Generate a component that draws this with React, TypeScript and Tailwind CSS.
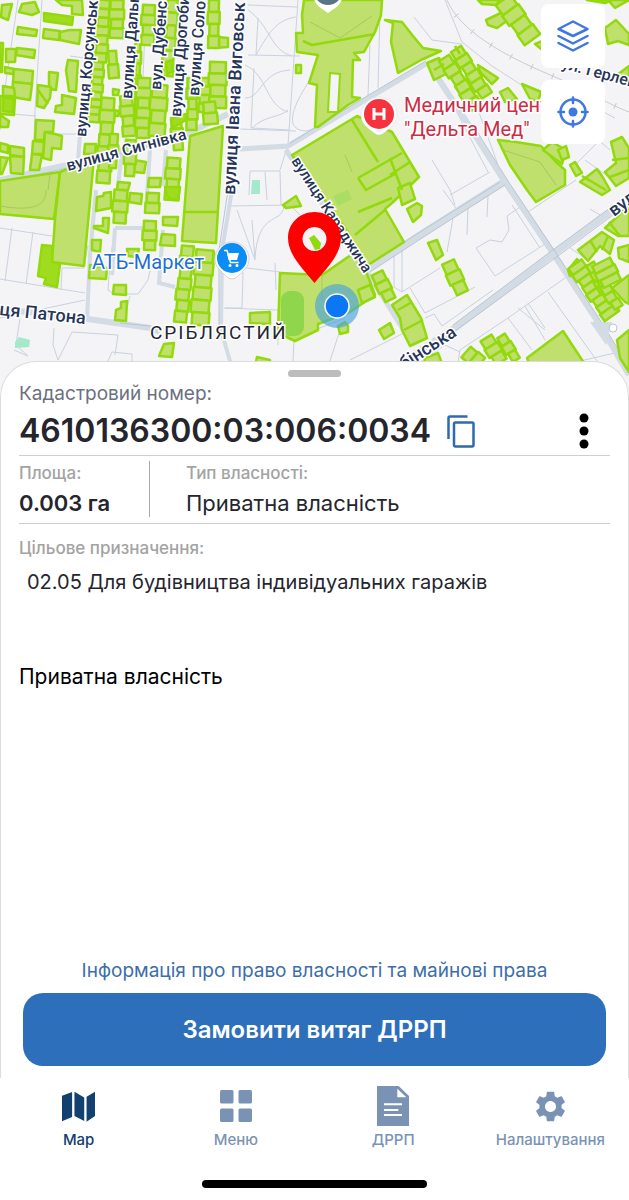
import { MdSettings } from "react-icons/md";

type Strip = [number, number, number, number, number, number];

// Rows of narrow plots: start x/y, end x/y, row width, number of plots
const strips: Strip[] = [
  [104, 0, 100, 62, 12, 7],
  [98, 62, 94, 122, 11, 8],
  [108, 98, 103, 183, 13, 7],
  [114, 134, 112, 168, 8, 3],
  [117, 0, 116, 38, 13, 4],
  [112, 51, 114, 78, 8, 2],
  [138, 40, 136, 134, 5, 8],
  [126, 96, 129, 136, 12, 4],
  [131, 140, 129, 176, 10, 3],
  [149, 5, 147, 45, 12, 4],
  [144, 78, 142, 138, 13, 6],
  [160, 85, 156, 136, 15, 4],
  [173, 0, 167, 76, 10, 6],
  [174, 158, 171, 200, 13, 4],
  [176, 118, 178, 150, 10, 3],
  [192, 78, 192, 130, 9, 5],
  [204, 78, 204, 112, 11, 4],
  [214, 0, 213, 48, 10, 4],
  [218, 62, 217, 108, 16, 4],
  [209, 102, 211, 124, 12, 2],
  [121, 190, 119, 223, 13, 3],
  [153, 193, 152, 213, 12, 2],
  [150, 221, 149, 250, 12, 3],
  [188, 246, 180, 322, 12, 7],
  [205, 250, 199, 325, 17, 6],
  [503, 0, 532, 40, 18, 4],
  [444, 58, 476, 108, 12, 6],
  [456, 49, 486, 96, 12, 6],
  [448, 262, 462, 293, 13, 3],
  [377, 273, 390, 300, 12, 3],
  [575, 264, 612, 316, 16, 8],
  [590, 264, 618, 308, 9, 6],
  [601, 262, 612, 284, 20, 3],
  [486, 338, 501, 362, 13, 3],
  [501, 336, 516, 360, 9, 3],
  [466, 352, 480, 364, 14, 2],
];

const plots = [
  "2,5 12,4 10,12 8,20 1,17",
  "22,4 35,2 39,12 32,15 19,12",
  "18,27 37,30 36,36 17,34",
  "44,29 60,31 59,40 43,38",
  "60,32 70,30 81,30 79,44 60,40",
  "56,0 82,0 83,15 72,14 72,6 62,5",
  "6,49 16,49 15,62 6,62",
  "17,48 35,50 34,58 16,55",
  "0,43 3,43 2,72 0,72",
  "5,67 14,69 13,74 5,73",
  "14,69 33,71 32,84 13,82",
  "13,82 32,84 30,100 12,97",
  "3,86 14,88 15,96 3,96",
  "0,96 15,98 14,115 0,114",
  "0,115 9,121 8,127 0,127",
  "49,72 58,73 56,90 49,89",
  "38,85 51,87 50,98 44,108 37,106",
  "68,60 78,61 76,92 69,91 66,70",
  "62,95 76,98 74,114 55,112 56,106 62,105",
  "36,120 54,121 53,132 45,132 44,140 35,140",
  "45,132 55,134 62,136 61,149 52,148 51,160 43,158",
  "33,141 44,142 43,154 32,154",
  "32,154 42,155 39,170 30,170",
  "0,143 8,145 8,153 0,151",
  "0,157 8,158 2,174 0,174",
  "10,146 24,148 24,157 10,155",
  "10,156 24,157 23,174 11,173",
  "85,144 96,144 95,154 84,154",
  "113,89 119,90 118,95 113,95",
  "113,110 119,111 118,116 113,116",
  "125,160 134,158 133,175 126,175",
  "134,160 146,162 144,173 134,172",
  "149,178 161,178 160,187 148,187",
  "118,182 130,183 128,190 117,190",
  "218,37 228,38 228,47 215,48",
  "97,197 103,196 104,193 111,192 111,208 96,211",
  "103,218 109,218 108,233 94,228 94,226 103,226",
  "130,193 142,194 141,204 129,202",
  "163,217 178,217 177,226 163,225",
  "162,234 175,235 175,246 160,245",
  "198,251 214,252 213,262 198,261",
  "92,240 101,240 100,252 92,250",
  "90,265 107,268 106,279 89,278",
  "127,249 139,249 137,257 128,256",
  "114,285 126,285 126,295 113,294",
  "116,310 121,308 121,302 127,301 126,321 115,320",
  "164,344 174,343 172,357 159,356",
  "250,313 270,312 270,324 250,323",
  "257,357 270,360 270,366 255,366",
  "283,205 296,196 301,206 286,208",
  "304,0 382,0 381,15 375,32 364,52 354,53 360,60 353,60 352,97 360,98 348,105 318,127 315,127 317,85 309,83 318,55 297,52 296,33 303,33 302,15",
  "385,20 402,22 413,36 423,48 441,51 421,60 398,73 391,42 393,23",
  "427,63 439,58 448,73 434,80",
  "478,65 498,78 492,84 480,72",
  "500,92 508,88 517,99 505,102",
  "522,84 541,92 538,101 530,99",
  "486,20 503,12 508,20 497,28 488,25",
  "478,0 500,0 496,5 482,4",
  "535,44 545,40 545,52",
  "608,0 629,0 615,8",
  "605,28 616,20 629,34 629,45 618,41 608,44",
  "617,75 629,66 629,82",
  "296,65 301,65 301,73 296,73",
  "498,140 516,142 541,146 556,162 565,170 565,185 536,202 527,190 510,165",
  "543,150 552,142 566,150 562,164",
  "558,150 566,146 569,157 562,160",
  "570,165 575,162 582,173 576,176",
  "580,182 597,169 602,176 610,190 602,195",
  "611,142 622,137 629,148 629,178 616,186 605,172 616,163",
  "587,0 612,0 605,3",
  "605,228 618,216 629,205 629,236 618,236",
  "428,243 437,240 443,255 436,260",
  "578,250 602,232 614,240 610,254 600,246 588,261",
  "618,248 629,245 629,262 619,258",
  "612,288 629,275 629,304 625,302",
  "617,340 629,330 629,372 620,358",
  "568,270 577,259 583,266 570,276",
  "527,358 563,331 586,366 530,366",
  "425,358 438,353 443,366 424,366",
  "358,290 370,285 375,297 362,303",
  "379,330 390,323 394,333 384,339",
  "338,326 345,322 348,326 348,332 340,334",
  "398,188 410,183 415,199 402,205",
  "407,209 417,203 422,206 421,215 413,222",
  "392,305 407,295 421,318 427,338 410,346 402,330 400,318",
];

const fields = [
  "0,181 60,172 54,219 0,214",
  "60,172 94,158 91,190 84,266 52,262 55,219",
  "190,136 223,126 216,243 182,241",
  "292,155 357,116 392,132 419,177 392,203 385,209 404,242 368,265 345,228",
  "280,273 322,275 358,250 375,295 350,312 318,324 318,330 295,341 278,333",
];

const thinLines = [
  "M42,0 L35,110 L33,170",
  "M18,0 L5,88 L0,130",
  "M12,114 L36,116 M50,134 L78,134 M70,56 L85,58",
  "M0,228 L52,236 M12,228 L5,281 M33,232 L26,284 M0,279 L85,293",
  "M115,228 L110,262 L108,290 L114,294 L138,294 L148,280 L152,262 M130,296 L126,312",
  "M85,300 L0,318 M20,318 L16,345 L28,356 L14,350 M54,328 L53,345 L58,360 L72,332 L118,335 L115,355 M108,361 L112,352 L132,354 L132,361",
  "M88,245 L84,268 L62,268 L61,290",
  "M298,0 L288,145 L280,170",
  "M248,5 L297,7 M248,55 L300,56 M258,18 L256,55 M248,10 C270,25 270,50 292,56 M256,55 C268,35 275,20 296,17",
  "M245,65 C268,75 265,105 288,112 M245,98 C262,98 260,72 290,70 M254,68 L251,128 L290,130 M252,128 C265,115 280,118 288,110 M240,129 L296,131",
  "M310,80 C290,110 285,130 306,131 L316,128 M370,45 L368,95 M380,10 L378,88",
  "M250,171 L280,171 L281,205 M250,171 L249,195 M265,172 L267,200",
  "M228,206 L290,205 L300,215 M237,210 L255,260 L252,220 M255,258 C258,210 282,225 284,206 M222,265 L280,272 M243,272 L242,308 L225,308 M275,263 L276,290 M224,308 L278,310 L278,345 M294,340 L293,361",
  "M290,340 L345,318 M340,330 L330,361 M350,360 L410,330",
  "M445,0 L462,42 L492,66 L520,84 L545,92 M414,17 L432,40 L462,44",
  "M432,160 L450,190 L455,205 M450,195 L490,172 M440,80 L488,172 M460,60 L498,165",
  "M453,218 L447,252 M468,208 L467,235 M488,196 L487,217 M443,190 L456,208",
  "M545,244 L495,276 L476,248 L490,240 L502,242 L509,230 L507,216 L520,207 M512,205 L540,248 M528,212 L576,180",
  "M394,248 L394,287 L402,292 L402,250 M402,292 L440,268 M410,288 L425,313 L475,287 M434,314 L442,326 L493,290 M425,318 L434,314",
  "M565,278 L508,318 L460,350 L458,362 M508,318 L532,350 M518,308 L545,330 M528,303 L545,328 M548,292 L597,361 M525,306 L545,340 M420,362 L445,345 L460,352",
  "M590,209 L600,215 M570,248 L585,258 M580,361 L615,353",
  "M575,165 L600,140 M585,160 L606,175 M575,120 L610,150 M600,110 L615,118",
  "M145,30 L143,78",
];

const roads = [
  "M232,190 L222,250 L221,330 L232,368",
  "M96,190 L90,255 L87,320",
  "M80,135 L78,160",
  "M115,228 L145,228 M115,228 L112,275 M163,230 L159,283 L175,287",
  "M122,150 L118,186 M150,150 L146,210 M166,150 L163,186 M190,250 L192,245",
];

const label = "fill-[#26355a] stroke-white stroke-[3px] font-[Roboto,sans-serif] [paint-order:stroke]";

function stripPlots([x1, y1, x2, y2, w, n]: Strip) {
  const len = Math.hypot(x2 - x1, y2 - y1);
  const ux = (x2 - x1) / len;
  const uy = (y2 - y1) / len;
  return Array.from({ length: n }, (_, i) => {
    const a = (len * i) / n;
    const b = (len * (i + 1)) / n;
    const left = w / 2 + (i % 2);
    const right = w / 2 + ((i + 1) % 3) - 1;
    const at = (d: number, s: number) =>
      `${(x1 + ux * d - uy * s).toFixed(1)},${(y1 + uy * d + ux * s).toFixed(1)}`;
    return [at(a, -left), at(a, right), at(b, right), at(b, -left)].join(" ");
  });
}

function CadastralMap() {
  return (
    <svg
      viewBox="0 0 629 390"
      preserveAspectRatio="xMidYMin slice"
      className="h-full w-full"
      role="img"
      aria-label="Карта"
    >
      <rect width="629" height="390" fill="#f4f3f5" />

      <g fill="none" stroke="#c9d2e0" strokeWidth="1">
        {thinLines.map((d) => (
          <path key={d} d={d} />
        ))}
      </g>

      <g fill="none" stroke="#d3dbe4" strokeWidth="5">
        {roads.map((d) => (
          <path key={d} d={d} strokeWidth="4" />
        ))}
        <path d="M0,180 L63,166 L188,133 L228,114" strokeWidth="6" />
        <path d="M240,149 L288,146 L372,96 L426,64" />
        <path d="M0,309 L88,319 L150,328 L160,332" strokeWidth="6" />
        <path d="M368,269 L420,235 L505,181" strokeWidth="7" />
        <path d="M438,78 L475,135 L505,182 L553,253 L600,325 L629,375" strokeWidth="6" />
        <path d="M390,370 L455,328 L556,252 L629,198" strokeWidth="7" />
        <path d="M286,150 L340,230 L372,280 L410,340" />
      </g>
      <g fill="none" stroke="#b9c6d4" strokeWidth="1">
        <path d="M0,183 L63,169 L188,136" />
        <path d="M366,267 L420,232 L500,182 M370,272 L422,238 L505,185" />
        <path d="M476,130 L508,181 L556,253 L602,323 L629,367" />
        <path d="M455,331 L558,256 L629,203 M453,325 L554,249 L629,194" />
        <path d="M219,330 L219,250 L228,190" />
        <path d="M290,143 L372,93 L426,61 M120,323 L150,326" />
      </g>
      <path d="M590,322 L612,322 L606,345 Z" fill="#d3dbe4" />
      <circle cx="613" cy="328" r="4" fill="#fff" stroke="#b9c6d4" />

      <path d="M445,-5 C455,25 490,50 555,77 C590,92 610,105 629,112" fill="none" stroke="#cccbd0" />
      <path
        d="M445,-5 C455,25 490,50 555,77 C590,92 610,105 629,112"
        fill="none"
        stroke="#cccbd0"
        strokeWidth="6"
        strokeDasharray="1 22"
      />
      <path d="M252,180 h8 v14 h-9 z M15,342 l4,-5 11,3 -1,7 -14,1 z" fill="#a5e8cb" />

      <g fill="#bfe06c" stroke="#93d90c" strokeWidth="2.5" strokeLinejoin="round">
        {fields.map((points) => (
          <polygon key={points} points={points} />
        ))}
        {plots.map((points) => (
          <polygon key={points} points={points} />
        ))}
        {strips.flatMap(stripPlots).map((points) => (
          <polygon key={points} points={points} />
        ))}
        <g fill="#9fdc20">
          <polygon points="44,13 73,17 72,25 44,21" />
          <polygon points="42,245 52,246 52,262 60,264 57,287 44,284 46,278 38,276" />
          <polygon points="172,118 186,114 186,120 172,128" />
          <polygon points="165,187 180,187 178,200 168,198" />
          <polygon points="166,62 173,60 172,72 167,74" />
          <polygon points="3,97 14,99 13,112 3,111" />
        </g>
        <path
          d="M303,41 L312,45 L375,34 M352,120 L378,162 M358,178 L402,153 M358,178 L366,190 L395,174 M390,158 L402,190 M183,212 L217,212 M358,212 L392,198 M355,235 L385,210 M410,162 L390,175"
          fill="none"
        />
        <path
          d="M38,90 L48,104 M434,70 L444,64 M582,176 L606,190 M590,240 L597,252 M608,236 L602,250 M612,160 L629,158 M610,177 L629,170 M593,282 L602,296 M609,222 L620,236 M398,310 L412,302 M404,330 L423,320 M455,46 L460,54"
          fill="none"
        />
      </g>
      <polygon points="330,73 340,74 338,112 328,112" fill="#f4f3f5" stroke="#93d90c" strokeWidth="2" />
      <rect x="281" y="291" width="23" height="45" rx="9" fill="#8fd64c" />
      <path d="M333,196 l15,-6 4,9 -14,7 z" fill="#a9dd66" />
      <path
        d="M46,190 C46,205 35,212 0,206 M50,174 L48,190 M503,150 L540,162 L556,185 M345,155 L352,172 M322,276 L322,300 M310,22 L340,38 L372,16"
        fill="none"
        stroke="#a9c860"
      />

      {/* Street and place names */}
      <g className={label} fontWeight="500">
        <text fontSize="16" transform="translate(86,137) rotate(-85)">вулиця Корсунськ</text>
        <text fontSize="16" transform="translate(132,99) rotate(-86)">вулиця Дальн</text>
        <text fontSize="16" transform="translate(161,90) rotate(-86)">вул. Дубенс</text>
        <text fontSize="16" transform="translate(181,117) rotate(-86)">вулиця Дрогоби</text>
        <text fontSize="16" transform="translate(199,96) rotate(-86)">вулиця Соло</text>
        <text fontSize="16" transform="translate(68,171) rotate(-15)">вулиця Сигнівка</text>
        <text fontSize="16" transform="translate(561,68) rotate(15)">ул. Герлен</text>
        <text fontSize="15" transform="translate(291,161) rotate(57)">вулиця Караджича</text>
      </g>
      <g className={label} fontWeight="500">
        <text fontSize="18" transform="translate(235,195) rotate(-87)">вулиця Івана Виговськ</text>
        <text fontSize="18" transform="translate(-1,315) rotate(6)">ця Патона</text>
        <text fontSize="18" transform="translate(614,217) rotate(-37)">вул</text>
        <text fontSize="18" transform="translate(404,370) rotate(-33)">бінська</text>
      </g>
      <g className="stroke-white stroke-[3px] font-[Roboto,sans-serif] [paint-order:stroke]">
        <text x="92" y="269" fontSize="20" fill="#1c6fd0">АТБ-Маркет</text>
        <text x="404" y="112" fontSize="20" fill="#cf2b45">Медичний цент</text>
        <text x="404" y="136" fontSize="20" fill="#cf2b45">"Дельта Мед"</text>
        <text x="150" y="339" fontSize="19" fill="#1f2733" letterSpacing="2">СРІБЛЯСТИЙ</text>
      </g>

      {/* Place markers */}
      <path d="M313,-8 C313,6 322,8 328,13 C334,8 343,6 343,-8 Z" fill="#fff" />
      <circle cx="328" cy="-9" r="14" fill="#5b7288" />

      <path d="M361,115 a18,18 0 1 1 36,0 c0,9 -7,13 -12,17 q-6,6 -12,0 c-5,-4 -12,-8 -12,-17 z" fill="#fff" stroke="#d6d6da" strokeWidth="0.5" />
      <circle cx="379" cy="114" r="15" fill="#f7323f" />
      <path d="M374,108 V120 M384,108 V120 M374,114 H384" stroke="#fff" strokeWidth="3" fill="none" />

      <path d="M215,259 a17,17 0 1 1 34,0 c0,8 -6,12 -11,17 q-6,6 -12,0 c-5,-5 -11,-9 -11,-17 z" fill="#fff" stroke="#c4c4c8" strokeWidth="0.7" />
      <circle cx="232" cy="258" r="15" fill="#0b8df5" />
      <path d="M227,253 h12 l-2,7 h-8.500 z" fill="#fff" />
      <path d="M224,250.500 h3 l3.500,12 h8" fill="none" stroke="#fff" strokeWidth="1.500" />
      <circle cx="230" cy="265.500" r="1.500" fill="#fff" />
      <circle cx="237" cy="265.500" r="1.500" fill="#fff" />

      {/* Current position */}
      <circle cx="337" cy="306" r="22" fill="#4aa3dc" fillOpacity="0.65" />
      <circle cx="337" cy="306" r="12" fill="#0a78f5" stroke="#fff" strokeWidth="1.500" />

      {/* Selected parcel */}
      <path
        fillRule="evenodd"
        fill="#fe0000"
        d="M314.500,212 C329,212 341,223 341,238 C341,255 325,270 314.500,283 C304,270 288,255 288,238 C288,223 300,212 314.500,212 Z M314.500,227 a12,12 0 1 0 0.010,0 Z"
      />
      <path d="M309,238 l5,-3 7,8 -1,6 -5,1 z" fill="#93d90c" />
    </svg>
  );
}

function LayersIcon() {
  return (
    <svg viewBox="0 0 32 32" className="h-8 w-8" fill="none" stroke="#4078e0" strokeWidth="2.500" strokeLinejoin="round" strokeLinecap="round">
      <path d="M16,1.500 L30.500,9 L16,16 L1.500,9 Z" />
      <path d="M1.500,16 L16,23.500 L30.500,16" />
      <path d="M1.500,23 L16,30.500 L30.500,23" />
    </svg>
  );
}

function LocateIcon() {
  return (
    <svg viewBox="0 0 32 32" className="h-8 w-8" fill="none" stroke="#4078e0" strokeWidth="2.500" strokeLinecap="round">
      <circle cx="16" cy="16" r="12.500" />
      <path d="M16,1.500 V7 M16,25 V30.500 M1.500,16 H7 M25,16 H30.500" />
      <circle cx="16" cy="16" r="4.500" fill="#4078e0" stroke="none" />
    </svg>
  );
}

function CopyIcon() {
  return (
    <svg viewBox="0 0 28 33" className="h-[33px] w-7" fill="none" stroke="#2f69ae" strokeWidth="2.500" strokeLinejoin="round">
      <path d="M1.500,24 V3 Q1.500,1.500 3,1.500 H20.500" />
      <rect x="7" y="7.500" width="19.500" height="24" rx="1.500" />
    </svg>
  );
}

function MapIcon() {
  return (
    <svg viewBox="0 0 98 90" className="h-[31px] w-[33px]" fill="#12406f">
      <path d="M0,13 L30,2 V76 L0,89 Z M37,1 L66,18 V88 L37,73 Z M73,16 L98,1 V73 L73,90 Z" />
    </svg>
  );
}

function MenuIcon() {
  return (
    <svg viewBox="0 0 32 32" className="h-8 w-8" fill="currentColor">
      <rect width="13.500" height="13.500" rx="1.500" />
      <rect x="18.500" width="13.500" height="13.500" rx="1.500" />
      <rect y="18.500" width="13.500" height="13.500" rx="1.500" />
      <rect x="18.500" y="18.500" width="13.500" height="13.500" rx="1.500" />
    </svg>
  );
}

function DocumentIcon() {
  return (
    <svg viewBox="0 0 96 120" className="h-10 w-8" fill="currentColor">
      <path fillRule="evenodd" d="M0,0 H65 L96,30 V120 H0 Z M61,8 V34 H88 Z" />
      <path d="M21,55 H75 M21,72 H64 M21,87 H75" stroke="#fff" strokeWidth="6" />
    </svg>
  );
}

const tabs = [
  { name: "Map", icon: <MapIcon />, active: true },
  { name: "Меню", icon: <MenuIcon />, active: false },
  { name: "ДРРП", icon: <DocumentIcon />, active: false },
  { name: "Налаштування", icon: <MdSettings className="h-[37px] w-[37px]" />, active: false },
];

export default function App() {
  return (
    <div className="flex min-h-screen flex-col bg-white font-[Inter,sans-serif] text-[#25252e]">
      <section className="relative h-[390px] overflow-hidden">
        <CadastralMap />
        <div className="absolute top-1 right-6 flex flex-col gap-3">
          <button type="button" aria-label="Шари" className="flex h-16 w-16 items-center justify-center rounded-lg bg-white">
            <LayersIcon />
          </button>
          <button type="button" aria-label="Моє місце" className="flex h-16 w-16 items-center justify-center rounded-lg bg-white">
            <LocateIcon />
          </button>
        </div>
      </section>

      <main className="relative -mt-[29px] flex flex-1 flex-col rounded-t-[36px] border border-b-0 border-[#dcdcdc] bg-white px-[18px] pt-2">
        <div className="mx-auto h-[7px] w-[53px] rounded-full bg-[#bcbcbc]" />

        <p className="mt-1 text-[19px] leading-[26px] text-[#6c7080]">Кадастровий номер:</p>
        <div className="flex h-12 items-center">
          <h1 className="text-[32px] leading-10 font-semibold">4610136300:03:006:0034</h1>
          <button type="button" aria-label="Скопіювати" className="ml-4">
            <CopyIcon />
          </button>
          <button type="button" aria-label="Ще" className="mr-5 ml-auto">
            <svg viewBox="0 0 12 36" className="h-9 w-3">
              <circle cx="6" cy="5" r="4.500" />
              <circle cx="6" cy="18" r="4.500" />
              <circle cx="6" cy="31" r="4.500" />
            </svg>
          </button>
        </div>

        <div className="flex border-y border-[#cfcfcf] pt-[5px] pb-1.5">
          <div className="w-[131px] border-r border-[#a8a8a8]">
            <p className="text-[17px] leading-6 font-medium text-[#a3a3a3]">Площа:</p>
            <p className="mt-1 text-[22px] leading-7 font-semibold">0.003 га</p>
          </div>
          <div className="pl-9">
            <p className="text-[17px] leading-6 font-medium text-[#a3a3a3]">Тип власності:</p>
            <p className="mt-1 text-[22px] leading-7">Приватна власність</p>
          </div>
        </div>

        <p className="mt-3 text-[17px] leading-6 font-medium text-[#a3a3a3]">Цільове призначення:</p>
        <p className="mt-2 px-2 text-xl leading-7">02.05 Для будівництва індивідуальних гаражів</p>
        <p className="mt-[67px] text-[21px] leading-7 text-black">Приватна власність</p>

        <div className="mt-auto flex flex-col items-stretch px-1 pb-3">
          <a href="#rights" className="text-center text-[19px] leading-7 text-[#3c6ea8]">
            Інформація про право власності та майнові права
          </a>
          <button type="button" className="mt-2 h-[73px] rounded-[20px] bg-[#2d6fbb] text-2xl font-semibold text-white">
            Замовити витяг ДРРП
          </button>
        </div>
      </main>

      <nav className="grid grid-cols-4 pt-2">
        {tabs.map((tab) => (
          <button
            key={tab.name}
            type="button"
            className={
              tab.active
                ? "flex flex-col items-center text-[15px] font-medium text-[#12406f]"
                : "flex flex-col items-center text-[15px] font-medium text-[#7a93b5]"
            }
          >
            <span className="flex h-10 items-center">{tab.icon}</span>
            <span className="mt-1 leading-5">{tab.name}</span>
          </button>
        ))}
      </nav>
      <div className="mx-auto mt-[30px] mb-3 h-2 w-[225px] rounded-full bg-black" />
    </div>
  );
}
